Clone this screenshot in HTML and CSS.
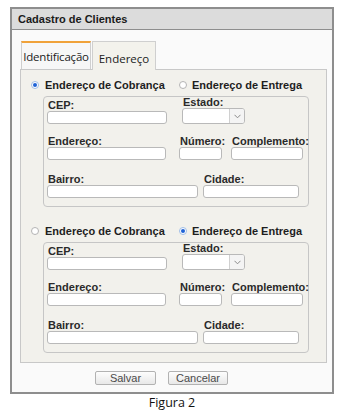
FILE: index.html
```html
<!DOCTYPE html>
<html lang="pt-BR">
<head>
  <meta charset="UTF-8">
  <meta name="viewport" content="width=device-width, initial-scale=1.0">
  <title>Cadastro de Clientes</title>
  <link rel="stylesheet" href="styles.css">
</head>
<body>
  <div class="window">
    <div class="window-title">Cadastro de Clientes</div>
    <div class="window-body">
      <div class="tabs">
        <div class="tab tab-first">Identificação</div>
        <div class="tab tab-active">Endereço</div>
      </div>
      <div class="tab-panel">

        <div class="address-group">
          <div class="radio-row">
            <label class="radio-option radio-first"><span class="radio checked"></span>Endereço de Cobrança</label>
            <label class="radio-option"><span class="radio"></span>Endereço de Entrega</label>
          </div>
          <div class="address-box">
            <div class="field-row row-top">
              <div class="field w-cep"><span class="field-label">CEP:</span><input type="text" class="input"></div>
              <div class="field w-estado"><span class="field-label">Estado:</span>
                <div class="select"><span class="select-value"></span><span class="select-arrow"><svg width="7" height="5" viewBox="0 0 7 5"><polyline points="0.5,0.8 3.5,3.8 6.5,0.8" fill="none" stroke="#8a8a8a" stroke-width="1"/></svg></span></div>
              </div>
            </div>
            <div class="field-row row-mid">
              <div class="field w-endereco"><span class="field-label">Endereço:</span><input type="text" class="input"></div>
              <div class="field w-numero"><span class="field-label">Número:</span><input type="text" class="input"></div>
              <div class="field w-compl"><span class="field-label">Complemento:</span><input type="text" class="input"></div>
            </div>
            <div class="field-row row-bottom">
              <div class="field w-bairro"><span class="field-label">Bairro:</span><input type="text" class="input"></div>
              <div class="field w-cidade"><span class="field-label">Cidade:</span><input type="text" class="input"></div>
            </div>
          </div>
        </div>

        <div class="address-group">
          <div class="radio-row">
            <label class="radio-option radio-first"><span class="radio"></span>Endereço de Cobrança</label>
            <label class="radio-option"><span class="radio checked"></span>Endereço de Entrega</label>
          </div>
          <div class="address-box">
            <div class="field-row row-top">
              <div class="field w-cep"><span class="field-label">CEP:</span><input type="text" class="input"></div>
              <div class="field w-estado"><span class="field-label">Estado:</span>
                <div class="select"><span class="select-value"></span><span class="select-arrow"><svg width="7" height="5" viewBox="0 0 7 5"><polyline points="0.5,0.8 3.5,3.8 6.5,0.8" fill="none" stroke="#8a8a8a" stroke-width="1"/></svg></span></div>
              </div>
            </div>
            <div class="field-row row-mid">
              <div class="field w-endereco"><span class="field-label">Endereço:</span><input type="text" class="input"></div>
              <div class="field w-numero"><span class="field-label">Número:</span><input type="text" class="input"></div>
              <div class="field w-compl"><span class="field-label">Complemento:</span><input type="text" class="input"></div>
            </div>
            <div class="field-row row-bottom">
              <div class="field w-bairro"><span class="field-label">Bairro:</span><input type="text" class="input"></div>
              <div class="field w-cidade"><span class="field-label">Cidade:</span><input type="text" class="input"></div>
            </div>
          </div>
        </div>

      </div>
      <div class="actions">
        <button class="btn">Salvar</button>
        <button class="btn">Cancelar</button>
      </div>
    </div>
  </div>
  <div class="caption">Figura 2</div>
</body>
</html>
```

FILE: styles.css
```css
* {
  box-sizing: border-box;
}
body {
  margin: 0;
  padding: 7px 0 0 10px;
  background: #fff;
  font-family: 'Liberation Sans', Arial, sans-serif;
  color: #222;
}
.window {
  width: 324px;
  border: 2px solid #8e8e8e;
  background: #fafafa;
}
.window-title {
  height: 21px;
  padding: 0 6px;
  background: #dcdcdc;
  border-bottom: 1px solid #8e8e8e;
  font-size: 11px;
  font-weight: bold;
  line-height: 20px;
  color: #1a1a1a;
}
.window-body {
  padding: 11px 5px 7px 8px;
}
.tabs {
  display: flex;
  align-items: flex-end;
  gap: 1px;
  height: 28px;
  padding-left: 1px;
  font-family: 'Open Sans', 'Noto Sans', sans-serif;
  font-size: 11.5px;
  color: #222;
}
.tab {
  height: 28px;
  border: 1px solid #cfcfcf;
  border-bottom: none;
  text-align: center;
  white-space: nowrap;
  line-height: 16px;
}
.tab-first {
  width: 70px;
  border-top: 2px solid #f0a23a;
  padding-top: 6px;
  background: #f7f7f7;
  letter-spacing: -0.2px;
}
.tab-active {
  position: relative;
  z-index: 1;
  width: 64px;
  height: 29px;
  margin-bottom: -1px;
  padding-top: 9px;
  background: #f3f2ec;
}
.tab-panel {
  height: 294px;
  padding: 9px 10px 9px 10px;
  border: 1px solid #c8c8c8;
  background: #f2f1ec;
}
.address-group + .address-group {
  margin-top: 18px;
}
.radio-row {
  display: flex;
  height: 12px;
  margin-bottom: 5px;
  font-size: 11px;
  font-weight: bold;
  line-height: 12px;
  color: #1e1e1e;
}
.radio-option {
  display: flex;
  align-items: center;
  gap: 6px;
  white-space: nowrap;
}
.radio-option + .radio-option {
  gap: 5px;
}
.radio-first {
  width: 148px;
}
.radio {
  width: 8px;
  height: 8px;
  border: 1px solid #b4b4b4;
  border-radius: 50%;
  background: #fff;
  display: flex;
  align-items: center;
  justify-content: center;
}
.radio.checked {
  border-color: #9fbde6;
}
.radio.checked::after {
  content: '';
  width: 4px;
  height: 4px;
  border-radius: 50%;
  background: #1f63d6;
}
.address-box {
  width: 266px;
  height: 111px;
  margin-left: 12px;
  padding: 0 3px 8px 3px;
  border: 1px solid #c6c6c6;
  border-radius: 4px;
  background: #f2f1ec;
}
.field-row {
  display: flex;
  align-items: flex-end;
}
.row-top {
  gap: 15px;
}
.row-mid {
  gap: 13px;
  margin-top: 11px;
}
.row-mid .w-compl {
  margin-left: -4px;
}
.row-bottom {
  gap: 5px;
  margin-top: 13px;
}
.field {
  display: flex;
  flex-direction: column;
}
.field-label {
  height: 12px;
  font-size: 11px;
  font-weight: bold;
  line-height: 12px;
  color: #2a2a2a;
  white-space: nowrap;
  padding-left: 1px;
}
.w-estado .field-label {
  height: 11px;
  line-height: 11px;
}
.input {
  display: block;
  width: 100%;
  height: 13px;
  margin: 0;
  padding: 0;
  border: 1px solid #b9b9b9;
  border-radius: 3px;
  background: #fff;
}
.w-cep { width: 120px; }
.w-estado { width: 63px; }
.w-endereco { width: 119px; }
.w-numero { width: 43px; }
.w-compl { width: 72px; }
.w-bairro { width: 151px; }
.w-cidade { width: 96px; }
.select {
  display: flex;
  height: 16px;
  border: 1px solid #b9b9b9;
  border-radius: 3px;
  background: #fff;
}
.select-value {
  flex: 1;
}
.select-arrow {
  width: 15px;
  border-left: 1px solid #d0d0d0;
  background: #f4f4f4;
  display: flex;
  align-items: center;
  justify-content: center;
  border-radius: 0 2px 2px 0;
}
.actions {
  display: flex;
  gap: 12px;
  margin-top: 8px;
  padding-left: 75px;
}
.btn {
  height: 14px;
  padding: 0;
  border: 1px solid #b2b2b2;
  border-radius: 2px;
  background: linear-gradient(#fdfdfd, #e8e8e8);
  font-family: 'Liberation Sans', Arial, sans-serif;
  font-size: 11px;
  line-height: 12px;
  color: #4a4a4a;
}
.btn:first-child { width: 61px; }
.btn:last-child { width: 60px; }
.caption {
  width: 324px;
  margin-top: 1px;
  text-align: center;
  font-family: 'Open Sans', 'Noto Sans', sans-serif;
  font-size: 12.5px;
  line-height: 16px;
  color: #111;
}
```
